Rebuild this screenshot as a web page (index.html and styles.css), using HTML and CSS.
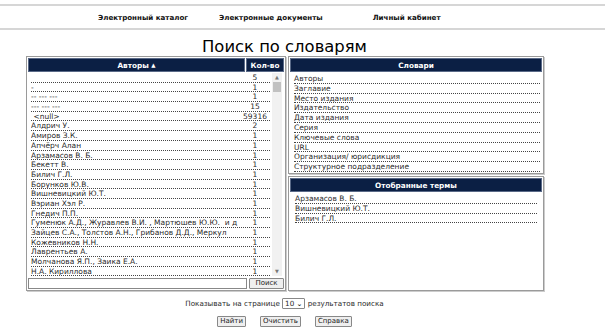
FILE: index.html
```html
<!DOCTYPE html>
<html lang="ru">
  <head>
    <meta charset="UTF-8" />
    <title>Поиск по словарям</title>
    <link rel="stylesheet" href="styles.css">
  </head>
  <body>
    <div class="topnav">
      <a class="nav-cat">Электронный каталог</a>
      <a class="nav-docs">Электронные документы</a>
      <a class="nav-cab">Личный кабинет</a>
    </div>

    <h1>Поиск по словарям</h1>

    <div class="search">
      <!-- Авторы -->
      <div class="panel authors">
        <div class="head">
          <div class="h-name">Авторы&nbsp;<span class="sort">&#9650;</span></div>
          <div class="h-count">Кол-во</div>
        </div>
        <div class="list-wrap">
          <div class="list">
            <div class="row"><span></span><span class="cnt">5</span></div>
            <div class="row"><span>-</span><span class="cnt">1</span></div>
            <div class="row"><span>-- --- ---</span><span class="cnt">1</span></div>
            <div class="row"><span>--- --- ---</span><span class="cnt">15</span></div>
            <div class="row"><span>&nbsp;&lt;null&gt;</span><span class="cnt">59316</span></div>
            <div class="row"><span>Алдрич У.</span><span class="cnt">2</span></div>
            <div class="row"><span>Амиров З.К.</span><span class="cnt">1</span></div>
            <div class="row"><span>Апчёрч Алан</span><span class="cnt">1</span></div>
            <div class="row"><span>Арзамасов В. Б.</span><span class="cnt">1</span></div>
            <div class="row"><span>Бекетт В.</span><span class="cnt">1</span></div>
            <div class="row"><span>Билич Г.Л.</span><span class="cnt">1</span></div>
            <div class="row"><span>Борунков Ю.В.</span><span class="cnt">1</span></div>
            <div class="row"><span>Вишневицкий Ю.Т.</span><span class="cnt">1</span></div>
            <div class="row"><span>Вэриан Хэл Р.</span><span class="cnt">1</span></div>
            <div class="row"><span>Гнедич П.П.</span><span class="cnt">1</span></div>
            <div class="row"><span>Гуменюк А.Д., Журавлев В.И. , Мартюшев Ю.Ю.&nbsp; и д</span><span class="cnt">1</span></div>
            <div class="row"><span>Зайцев С.А., Толстов А.Н., Грибанов Д.Д., Меркул</span><span class="cnt">1</span></div>
            <div class="row"><span>Кожевников Н.Н.</span><span class="cnt">1</span></div>
            <div class="row"><span>Лаврентьев А.</span><span class="cnt">1</span></div>
            <div class="row"><span>Молчанова Я.П., Заика Е.А.</span><span class="cnt">1</span></div>
            <div class="row"><span>Н.А. Кириллова</span><span class="cnt">1</span></div>
          </div>
          <div class="scrollbar">
            <div class="arrow">&#9650;</div>
            <div class="track"><div class="thumb"></div></div>
            <div class="arrow">&#9660;</div>
          </div>
        </div>
        <div class="find">
          <input type="text" class="find-input" />
          <button class="btn">Поиск</button>
        </div>
      </div>

      <div class="right-col">
        <div class="panel dicts">
          <div class="head"><div class="h-full">Словари</div></div>
          <div class="items">
            <div class="item">Авторы</div>
            <div class="item">Заглавие</div>
            <div class="item">Место издания</div>
            <div class="item">Издательство</div>
            <div class="item">Дата издания</div>
            <div class="item">Серия</div>
            <div class="item">Ключевые слова</div>
            <div class="item">URL</div>
            <div class="item">Организация/ юрисдикция</div>
            <div class="item">Структурное подразделение</div>
          </div>
        </div>
        <div class="panel chosen">
          <div class="head"><div class="h-full">Отобранные термы</div></div>
          <div class="items picked">
            <div class="item">Арзамасов В. Б.</div>
            <div class="item">Вишневицкий Ю.Т.</div>
            <div class="item">Билич Г.Л.</div>
          </div>
        </div>
      </div>
    </div>

    <div class="per-page">
      Показывать на странице
      <span class="select">10 <span class="caret">&#8964;</span></span>
      результатов поиска
    </div>

    <div class="actions">
      <button class="btn">Найти</button>
      <button class="btn">Очистить</button>
      <button class="btn">Справка</button>
    </div>
  </body>
</html>
```

FILE: styles.css
```css
body {
  margin: 0;
  padding-top: 4px;
  font-family: "DejaVu Sans", Verdana, sans-serif;
  font-size: 7.5px;
  color: #2a2a2a;
  background: #fff;
  width: 605px;
}
.topnav {
  border-top: 2px solid #d6d6d6;
  border-bottom: 2px solid #d6d6d6;
  height: 22px;
  display: flex;
  align-items: center;
  padding-left: 98px;
  font-weight: bold;
  font-size: 7.1px;
}
.topnav a {
  color: #111;
}
.nav-docs {
  margin-left: 31px;
}
.nav-cab {
  margin-left: 50px;
}
h1 {
  margin: 7px 0 0 0;
  text-align: center;
  font-weight: normal;
  font-size: 16.4px;
  line-height: 19px;
  color: #000;
  padding-right: 36px;
}
.search {
  display: flex;
  gap: 2px;
  margin-left: 26px;
  width: 518px;
  height: 235px;
}
.panel {
  border: 1px solid #9a9a9a;
  padding: 1px;
  box-shadow: 1px 1px 0 #ccc;
}
.authors {
  width: 256px;
  display: flex;
  flex-direction: column;
}
.head {
  display: flex;
  gap: 1px;
  height: 14px;
  color: #fff;
  font-weight: bold;
  font-size: 7.3px;
}
.head > div {
  background: #0b1f44;
  display: flex;
  align-items: center;
  justify-content: center;
  border: 1px solid #5a6a88;
}
.sort {
  font-size: 5.5px;
}
.h-name {
  flex: 1;
}
.h-count {
  width: 36px;
}
.h-full {
  flex: 1;
}
.list-wrap {
  display: flex;
  height: 203px;
  margin-top: 1px;
}
.list {
  flex: 1;
  padding: 0 2px 0 3px;
  overflow: hidden;
}
.row {
  display: flex;
  height: 8.7px;
  line-height: 9px;
  border-bottom: 1px dotted #444;
  white-space: nowrap;
}
.row span:first-child {
  flex: 1;
  overflow: hidden;
}
.cnt {
  width: 30px;
  text-align: center;
}
.scrollbar {
  width: 10px;
  margin-right: 2px;
  display: flex;
  flex-direction: column;
  background: #f1f1f1;
}
.arrow {
  height: 9px;
  font-size: 5px;
  color: #777;
  text-align: center;
  line-height: 9px;
}
.track {
  flex: 1;
}
.thumb {
  height: 10px;
  margin: 0 1px;
  background: #c1c1c1;
}
.find {
  display: flex;
  gap: 2px;
  margin-top: 2px;
}
.find-input {
  flex: 1;
  height: 11px;
  padding: 0;
  border: 1px solid #888;
  box-sizing: border-box;
}
.btn {
  font-family: "DejaVu Sans", Verdana, sans-serif;
  font-size: 7px;
  height: 11px;
  line-height: 9px;
  padding: 0 2px;
  border: 1px solid #888;
  border-radius: 1px;
  background: #efefef;
  color: #222;
}
.find .btn {
  width: 35px;
}
.right-col {
  flex: 1;
  display: flex;
  flex-direction: column;
  gap: 2px;
}
.dicts {
  height: 114px;
}
.chosen {
  flex: 1;
}
.items {
  padding: 2px 2px 0 4px;
}
.item {
  height: 8.8px;
  line-height: 9px;
  border-bottom: 1px dotted #444;
  white-space: nowrap;
}
.picked {
  padding-left: 5px;
  padding-right: 5px;
}
.per-page {
  text-align: center;
  margin-top: 7px;
  padding-right: 36px;
  line-height: 11px;
  font-size: 7.2px;
}
.select {
  display: inline-block;
  border: 1px solid #888;
  border-radius: 1px;
  padding: 0 2px;
  height: 9px;
  line-height: 9px;
}
.caret {
  font-size: 7px;
  font-weight: bold;
}
.actions {
  display: flex;
  justify-content: center;
  gap: 14px;
  margin-top: 7px;
  padding-right: 36px;
}
```
